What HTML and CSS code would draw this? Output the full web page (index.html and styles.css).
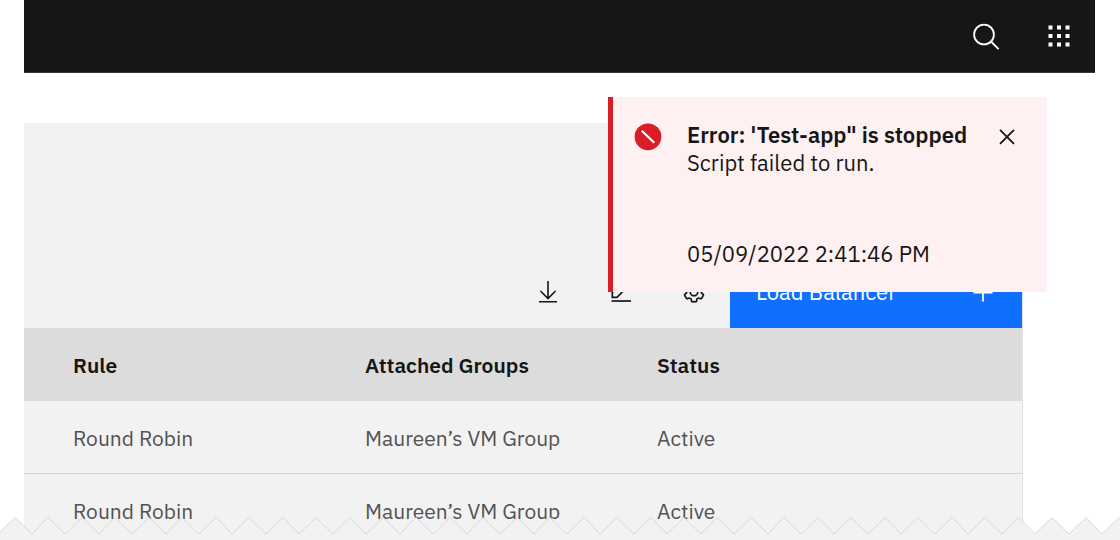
FILE: index.html
```html
<!DOCTYPE html>
<html lang="en">
<head>
<meta charset="utf-8">
<title>Load balancers</title>
<link rel="stylesheet" href="styles.css">
</head>
<body>
<div class="page">
  <header class="topbar">
    <button class="topbar-button" type="button" aria-label="Search">
      <svg width="30" height="30" viewBox="0 0 30 30" fill="none" stroke="currentColor" stroke-width="1.8"><circle cx="13" cy="13.500" r="9.900"/><path d="M20 20.500l7.600 7.700"/></svg>
    </button>
    <button class="topbar-button" type="button" aria-label="App switcher">
      <svg width="24" height="24" viewBox="0 0 24 24" fill="currentColor"><path d="M1.500 1.500h4v4h-4zM10 1.500h4v4h-4zM18.500 1.500h4v4h-4zM1.500 10h4v4h-4zM10 10h4v4h-4zM18.500 10h4v4h-4zM1.500 18.500h4v4h-4zM10 18.500h4v4h-4zM18.500 18.500h4v4h-4z"/></svg>
    </button>
  </header>

  <main class="panel">
    <div class="toolbar">
      <button class="tool" type="button" aria-label="Download">
        <svg width="24" height="24" viewBox="0 0 24 24" fill="none" stroke="currentColor" stroke-width="1.600"><path d="M12 1v17M4.500 11l7.500 7.500 7.500-7.500M3 21.800h18"/></svg>
      </button>
      <button class="tool" type="button" aria-label="Edit">
        <svg width="24" height="24" viewBox="0 0 24 24" fill="none" stroke="currentColor" stroke-width="1.700"><path d="M2.500 21h19.500"/><path d="M3.300 17.300v-4.800L14 2l4.500 4.500L8 17.300zM11 5l4.500 4.500"/></svg>
      </button>
      <button class="tool" type="button" aria-label="Settings">
        <svg width="24" height="24" viewBox="0 0 32 32" fill="currentColor" stroke="currentColor" stroke-width=".3"><path d="M27 16.760v-1.530l1.920-1.680A2 2 0 0 0 29.300 11l-2.360-4a2 2 0 0 0-1.730-1 2 2 0 0 0-.64.100l-2.430.820a11.350 11.350 0 0 0-1.310-.750l-.510-2.520a2 2 0 0 0-2-1.610h-4.680a2 2 0 0 0-2 1.610l-.510 2.520a11.480 11.480 0 0 0-1.320.750l-2.380-.860A2 2 0 0 0 6.790 6a2 2 0 0 0-1.730 1L2.700 11a2 2 0 0 0 .41 2.510L5 15.240v1.530l-1.890 1.680A2 2 0 0 0 2.700 21l2.360 4a2 2 0 0 0 1.730 1 2 2 0 0 0 .64-.100l2.430-.820a11.350 11.350 0 0 0 1.310.750l.510 2.520a2 2 0 0 0 2 1.610h4.720a2 2 0 0 0 2-1.610l.510-2.520a11.480 11.480 0 0 0 1.320-.750l2.420.820a2 2 0 0 0 .64.100 2 2 0 0 0 1.730-1l2.280-4a2 2 0 0 0-.41-2.510zM25.210 24l-3.430-1.160a8.860 8.860 0 0 1-2.710 1.570L18.360 28h-4.720l-.71-3.550a9.360 9.360 0 0 1-2.700-1.570L6.790 24l-2.360-4 2.720-2.400a8.900 8.900 0 0 1 0-3.130L4.430 12l2.360-4 3.430 1.160a8.860 8.860 0 0 1 2.710-1.570L13.640 4h4.720l.71 3.550a9.360 9.360 0 0 1 2.700 1.570L25.210 8l2.360 4-2.720 2.400a8.900 8.900 0 0 1 0 3.130L27.570 20z"/><path d="M16 22a6 6 0 1 1 6-6 5.940 5.940 0 0 1-6 6zm0-10a3.910 3.910 0 0 0-4 4 3.910 3.910 0 0 0 4 4 3.910 3.910 0 0 0 4-4 3.910 3.910 0 0 0-4-4z"/></svg>
      </button>
      <button class="primary" type="button">
        <span>Load Balancer</span>
        <svg width="24" height="24" viewBox="0 0 24 24" fill="none" stroke="currentColor" stroke-width="1.800"><path d="M12 3v18.500M2.500 12.500h19"/></svg>
      </button>
    </div>

    <table class="table">
      <thead>
        <tr><th scope="col">Rule</th><th scope="col">Attached Groups</th><th class="last" scope="col">Status</th></tr>
      </thead>
      <tbody>
        <tr><td>Round Robin</td><td>Maureen’s VM Group</td><td>Active</td></tr>
        <tr><td>Round Robin</td><td>Maureen’s VM Group</td><td>Active</td></tr>
      </tbody>
    </table>
  </main>

  <section class="toast" role="alert">
    <svg class="toast-icon" width="28" height="28" viewBox="0 0 28 28"><circle cx="14" cy="13.800" r="13.400" fill="#da1e28"/><path d="M7.700 7.700l12.600 12" stroke="#fff" stroke-width="2.200"/></svg>
    <div class="toast-body">
      <strong>Error: 'Test-app" is stopped</strong>
      <span>Script failed to run.</span>
      <time class="toast-time" datetime="2022-05-09T14:41:46">05/09/2022 2:41:46 PM</time>
    </div>
    <button class="toast-close" type="button" aria-label="Close">
      <svg width="18" height="18" viewBox="0 0 18 18" fill="none" stroke="currentColor" stroke-width="1.800"><path d="M2 1.800l14 14M16 1.800l-14 14"/></svg>
    </button>
  </section>

  <svg class="torn-edge" viewBox="0 0 1120 24" preserveAspectRatio="none" aria-hidden="true">
    <path fill="#f2f2f2" stroke="#d9d9d9" d="M-2 18L15 1.500 32 18 48 1.500 65 18 82 1.500 99 18 115 1.500 132 18 149 1.500 166 18 182 1.500 199 18 216 1.500 232 18 249 1.500 266 18 283 1.500 299 18 316 1.500 333 18 350 1.500 366 18 383 1.500 400 18 416 1.500 433 18 450 1.500 467 18 483 1.500 500 18 517 1.500 534 18 550 1.500 567 18 584 1.500 600 18 617 1.500 634 18 651 1.500 667 18 684 1.500 701 18 717 1.500 734 18 751 1.500 768 18 784 1.500 801 18 818 1.500 834 18 851 1.500 868 18 885 1.500 901 18 918 1.500 935 18 952 1.500 968 18 985 1.500 1002 18 1019 1.500 1035 18 1052 1.500 1069 18 1086 1.500 1102 18 1119 1.500 1136 18V30H-2z"/>
  </svg>
</div>
</body>
</html>
```

FILE: styles.css
```css
* {
  box-sizing: border-box;
}

body {
  margin: 0;
  background: #fff;
  color: #161616;
  font: 22px/28px "IBM Plex Sans", Roboto, "Liberation Sans", sans-serif;
}

button {
  border: 0;
  padding: 0;
  background: none;
  color: inherit;
  font: inherit;
}

svg {
  display: block;
  flex: none;
}

.page {
  position: relative;
  height: 100vh;
  overflow: hidden;
}

.topbar {
  display: flex;
  justify-content: flex-end;
  height: 73px;
  margin: 0 25px 0 24px;
  background: #161616;
  border-bottom: 1px solid #393939;
  color: #fff;
}

.topbar-button,
.tool {
  display: grid;
  place-items: center;
  width: 73px;
}

.panel {
  margin: 50px 97px 0 24px;
  padding-top: 133px;
  background: #f2f2f2;
  border-right: 1px solid #e0e0e8;
}

.toolbar {
  display: flex;
  justify-content: flex-end;
  height: 72px;
}

.primary {
  display: flex;
  align-items: center;
  justify-content: space-between;
  width: 292px;
  padding: 0 27px 0 26px;
  background: #0f6fff;
  color: #fff;
}

.table {
  width: 100%;
  table-layout: fixed;
  border-spacing: 0;
  font-size: 21px;
}

.table th,
.table td {
  width: 292px;
  height: 73px;
  padding: 0 0 0 49px;
  text-align: left;
}

.table .last {
  width: auto;
}

.table th {
  background: #dcdcdc;
  font-weight: 600;
}

.table td {
  padding-top: 2px;
  border-bottom: 1px solid #d4d4d4;
  color: #525252;
}

.toast {
  position: absolute;
  top: 97px;
  right: 73px;
  display: flex;
  align-items: flex-start;
  width: 439px;
  min-height: 195px;
  padding: 24px 31px 24px 21px;
  border-left: 5px solid #da1e28;
  background: #fff0f1;
}

.toast-icon {
  margin: 2px 25px 0 0;
}

.toast-body {
  display: flex;
  flex: 1;
  flex-direction: column;
  white-space: nowrap;
}

.toast-body strong {
  font-weight: 600;
}

.toast-time {
  margin-top: 63px;
}

.toast-close {
  margin-top: 7px;
}

.torn-edge {
  position: absolute;
  bottom: 0;
  left: 0;
  width: 100%;
  height: 24px;
}
```
